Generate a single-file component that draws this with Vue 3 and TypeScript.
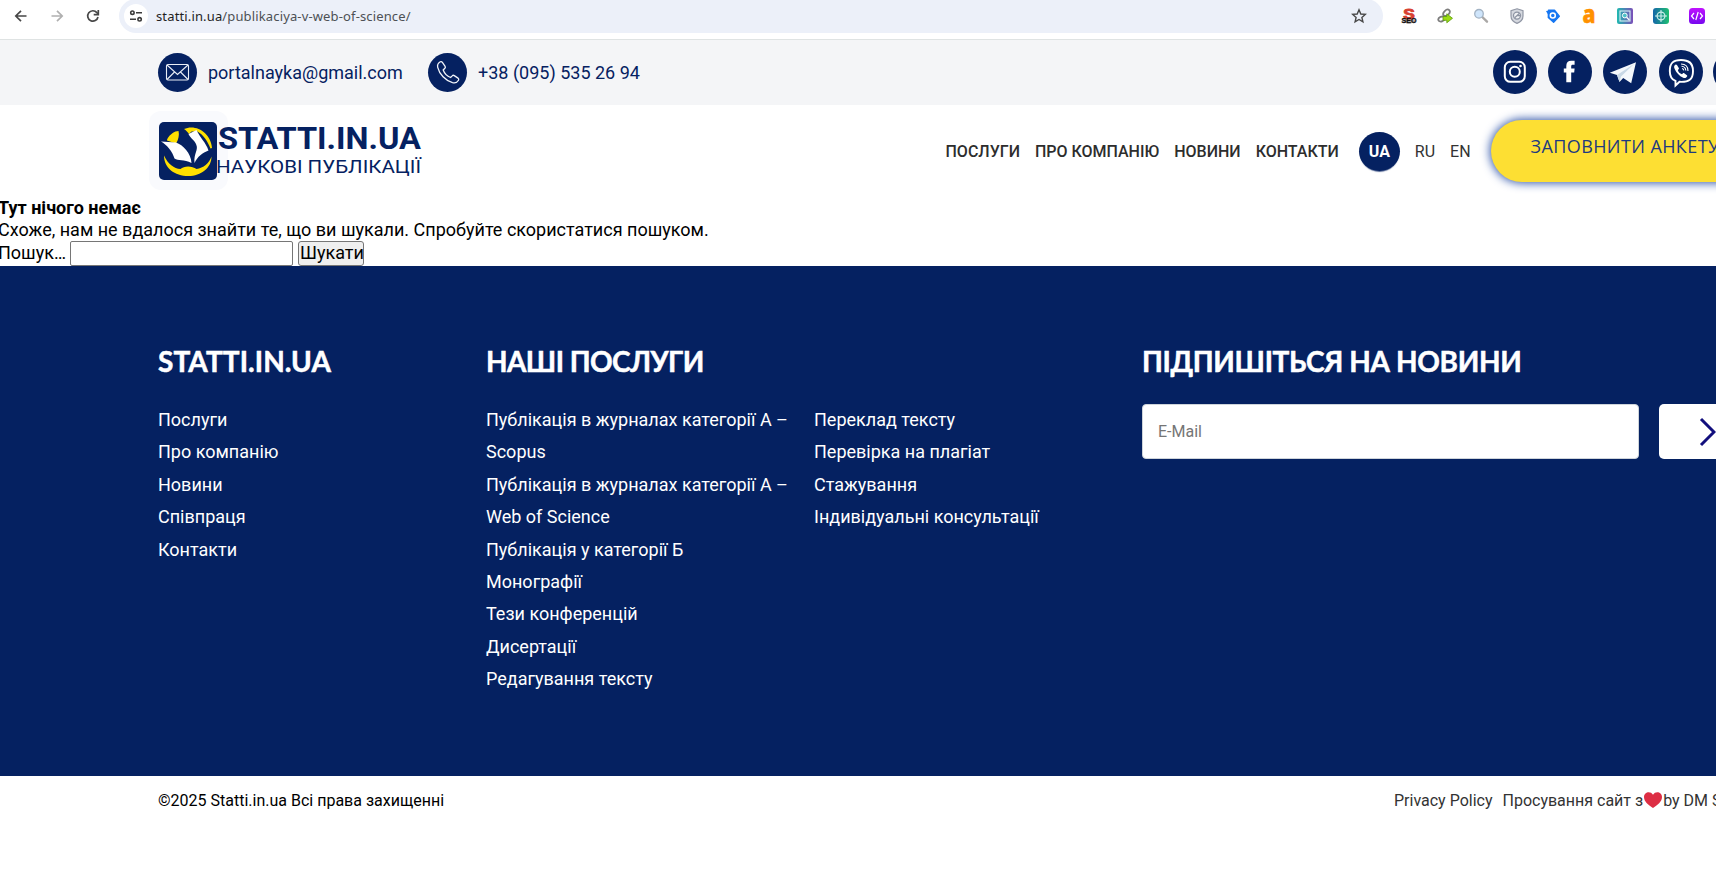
<script setup lang="ts">
interface Link {
  label: string
}

const nav: Link[] = [
  { label: 'ПОСЛУГИ' },
  { label: 'ПРО КОМПАНІЮ' },
  { label: 'НОВИНИ' },
  { label: 'КОНТАКТИ' },
]

const siteLinks: string[] = ['Послуги', 'Про компанію', 'Новини', 'Співпраця', 'Контакти']

const services: string[] = [
  'Публікація в журналах категорії А – Scopus',
  'Публікація в журналах категорії А – Web of Science',
  'Публікація у категорії Б',
  'Монографії',
  'Тези конференцій',
  'Дисертації',
  'Редагування тексту',
]

const moreServices: string[] = [
  'Переклад тексту',
  'Перевірка на плагіат',
  'Стажування',
  'Індивідуальні консультації',
]
</script>

<template>
  <div class="page">
    <div class="browser">
      <svg class="ctl" viewBox="0 0 16 16"><path d="M13.5 8H3M8 2.8L2.8 8L8 13.2" fill="none" stroke="#474747" stroke-width="1.7" /></svg>
      <svg class="ctl" viewBox="0 0 16 16"><path d="M2.5 8H13M8 2.8L13.2 8L8 13.2" fill="none" stroke="#b0b0b0" stroke-width="1.7" /></svg>
      <svg class="ctl" viewBox="0 0 16 16"><path d="M13 9A5.2 5.2 0 1 1 11.9 4.6L13 5.8" fill="none" stroke="#474747" stroke-width="1.7" /><path d="M13.3 2V6.6H8.7" fill="none" stroke="#474747" stroke-width="1.7" /></svg>
      <div class="omnibox">
        <span class="tune">
          <svg width="14" height="14" viewBox="0 0 14 14" fill="none" stroke="#3c3c3c" stroke-width="1.6">
            <circle cx="3.4" cy="3.7" r="1.7" /><path d="M7 3.7H13M1 10.3H7" /><circle cx="10.6" cy="10.3" r="1.7" />
          </svg>
        </span>
        <span class="url"><b>statti.in.ua</b>/publikaciya-v-web-of-science/</span>
        <svg class="star" viewBox="0 0 16 16"><path d="M8 1.8L9.8 6L14.3 6.4L10.9 9.4L11.9 13.8L8 11.5L4.1 13.8L5.1 9.4L1.7 6.4L6.2 6Z" fill="none" stroke="#474747" stroke-width="1.4" /></svg>
      </div>
      <div class="extensions">
        <svg viewBox="0 0 16 16">
          <ellipse cx="8" cy="13" rx="6" ry="2.6" fill="#b9b0ad" />
          <text x="8" y="10.6" text-anchor="middle" font-family="Liberation Sans" font-weight="700" font-size="14" fill="#d8402f" stroke="#d8402f" stroke-width=".9" textLength="11.5" lengthAdjust="spacingAndGlyphs">S</text>
          <text x="8" y="14.6" text-anchor="middle" font-family="Liberation Sans" font-weight="700" font-size="7" fill="#111" stroke="#111" stroke-width=".3" textLength="15" lengthAdjust="spacingAndGlyphs">SEO</text>
        </svg>
        <svg viewBox="0 0 16 16">
          <g fill="none" stroke="#7d7d7d" stroke-width="1.8"><ellipse cx="9.5" cy="4.8" rx="3.8" ry="2.5" transform="rotate(-45 9.5 4.8)" /><ellipse cx="4.5" cy="11" rx="3.3" ry="2.3" transform="rotate(-25 4.5 11)" /></g>
          <path d="M6 8.5H9.8V5.8L15.5 10.3L9.800 14.800V12.300H6Z" fill="#9bdc12" stroke="#5d9b10" stroke-width=".8" />
        </svg>
        <svg viewBox="0 0 16 16">
          <path d="M9.3 9L14 13.7" stroke="#aaa8a6" stroke-width="2.4" stroke-linecap="round" />
          <circle cx="6" cy="5.8" r="4.3" fill="#cfe5fb" stroke="#a3b3c4" stroke-width="1.3" />
        </svg>
        <svg viewBox="0 0 16 16">
          <path d="M8 .8L14 2.6V8C14 11.5 11.5 14 8 15.4C4.5 14 2 11.5 2 8V2.6Z" fill="#d5d8df" stroke="#9197a5" stroke-width="1.2" />
          <circle cx="8" cy="7.6" r="3.5" fill="#f1f2f5" stroke="#8d94a3" stroke-width="1.3" /><path d="M5.7 9.7L10.5 5.3M8 7.6H11" stroke="#8d94a3" stroke-width="1.2" />
        </svg>
        <svg viewBox="0 0 16 16">
          <path d="M3.5 2.2H9.5L14.3 8.2L8.6 14.2L3.3 9.4Z" fill="#1677f2" stroke="#1677f2" stroke-width="1.4" stroke-linejoin="round" />
          <path d="M1 3L5 2.6L3.600 7.500Z" fill="#1677f2" />
          <circle cx="7.8" cy="7.5" r="2.5" fill="#1677f2" stroke="#fff" stroke-width="1.5" />
        </svg>
        <svg viewBox="0 0 16 16"><text x="8" y="14.800" text-anchor="middle" font-family="Open Sans" font-weight="800" font-size="24.500" fill="#ff9100" stroke="#ff9100" stroke-width=".4" textLength="13" lengthAdjust="spacingAndGlyphs">a</text></svg>
        <svg viewBox="0 0 16 16">
          <defs><linearGradient id="teal" x2="1"><stop stop-color="#20b9b0" /><stop offset="1" stop-color="#7c4fb9" /></linearGradient></defs>
          <rect width="16" height="16" rx="2" fill="url(#teal)" /><rect x="3" y="3" width="10" height="10" fill="none" stroke="#d8f1f4" stroke-width="1.1" />
          <circle cx="7.8" cy="7.5" r="2.4" fill="#4cc1c6" stroke="#fff" stroke-width="1" /><path d="M9.6 9.3L12.3 12" stroke="#fff" stroke-width="1.3" />
        </svg>
        <svg viewBox="0 0 16 16">
          <defs><linearGradient id="sea" x2="1"><stop stop-color="#1567a8" /><stop offset="1" stop-color="#1fbf72" /></linearGradient></defs>
          <rect width="16" height="16" rx="3" fill="url(#sea)" /><circle cx="8" cy="8" r="3.9" fill="none" stroke="#cceee9" stroke-width="1.2" /><path d="M8 2V14M2 8H14" stroke="#cceee9" stroke-width="1.1" />
        </svg>
        <svg viewBox="0 0 16 16">
          <defs><linearGradient id="violet" x2="0" y2="1"><stop stop-color="#c012ff" /><stop offset="1" stop-color="#7608ee" /></linearGradient></defs>
          <rect width="16" height="16" rx="3.5" fill="url(#violet)" /><path d="M5 5L2.5 8L5 11M11 5L13.5 8L11 11M9.2 4L6.8 12" fill="none" stroke="#fff" stroke-width="1.2" />
        </svg>
      </div>
    </div>

    <div class="topbar">
      <div class="contact">
        <span class="disc">
          <svg width="39" height="39" viewBox="0 0 39 39" fill="none" stroke="#e9edf6" stroke-width="1.1"><rect x="8.5" y="11.5" width="22" height="15.5" rx="1.5" /><path d="M9 12L19.5 21.5L30 12M9 26.5L16.5 19M30 26.5L22.5 19" /></svg>
        </span>
        <span>portalnayka@gmail.com</span>
      </div>
      <div class="contact phone">
        <span class="disc">
          <svg width="39" height="39" viewBox="0 0 39 39" fill="none" stroke="#f1f4fa" stroke-width="1.3"><path d="M12.3 8.8C10 10.2 9.2 12.2 9.7 14.3C11.3 21 17.5 27.6 24.5 29.6C26.9 30.2 29.3 29.4 30.5 27.3C31 26.4 30.8 25.7 30 25.1L26.3 22.6C25.5 22.1 24.8 22.2 24.2 22.9L22.6 24.5C19.6 23.4 16.3 20 15.2 17L16.9 15.3C17.5 14.7 17.5 14 17.1 13.3L14.4 9.3C13.8 8.5 13.2 8.3 12.3 8.8Z" /></svg>
        </span>
        <span>+38 (095) 535 26 94</span>
      </div>
      <div class="social">
        <svg viewBox="0 0 44 44"><circle cx="22" cy="22" r="22" /><g fill="none" stroke="#fff" stroke-width="2"><rect x="11.8" y="11.8" width="20" height="20" rx="5.5" /><circle cx="21.8" cy="21.8" r="5" /></g><circle cx="27.5" cy="16" r="1.3" fill="#fff" /></svg>
        <svg viewBox="0 0 44 44"><circle cx="22" cy="22" r="22" /><path d="M18.3 32.3V22.5H15.8V18.5H18.3V16C18.3 12.7 20 10.8 23.3 10.8H26.6V14.8H24.8C23.5 14.8 23.2 15.4 23.2 16.5V18.5H26.6L26.2 22.5H23.2V32.3Z" fill="#fff" /></svg>
        <svg viewBox="0 0 44 44"><circle cx="22" cy="22" r="22" /><path d="M6.8 22.8L33 12.3L28.2 33.2L20.2 28L16.5 32L14 25Z" fill="#f4f8fc" /><path d="M14 25L31 14L18 26.5L16.5 32Z" fill="#c8d8e6" /></svg>
        <svg class="viber" viewBox="0 0 44 44"><circle cx="22" cy="22" r="22" /><path d="M22 10C14.5 10 10.8 12.6 10.8 21C10.8 26.5 12.5 29.5 16.5 30.9V35.5L20.5 31.8C30 32.3 34 29.5 34 21C34 12.6 29.5 10 22 10Z" fill="none" stroke="#fff" stroke-width="1.9" /><path d="M16.7 14.5C15 15.4 14.7 16.8 15.6 18.8C17.4 22.9 20.2 26 24.2 27.8C25.8 28.5 27.2 27.8 28.2 26.2C28.5 25.5 28 25 25.2 23.2C24.3 22.8 24 23.5 23 24.3C20.8 23.6 19.4 22 18.8 20C19.8 19.2 20.2 18.8 19.8 18C18.2 15.2 17.6 14.2 16.7 14.5Z" fill="#fff" /><path d="M22 14C26.5 14 29 16.5 29 21M22.5 16.3C25.2 16.5 26.7 18 26.8 20.6M23 18.5C24.2 18.6 24.7 19.2 24.8 20.4" fill="none" stroke="#fff" stroke-width="1.1" /></svg>
        <svg class="last" viewBox="0 0 44 44"><circle cx="22" cy="22" r="22" /></svg>
      </div>
    </div>

    <header class="header">
      <div class="logo-mark">
        <svg width="58" height="58" viewBox="0 0 58 58">
          <rect width="58" height="58" rx="5" fill="#052161" />
          <path d="M8 17.5C11 12 15.5 9 19.5 9C20.5 13 19.5 17.5 17 21.5L8 18.5Z" fill="#ffe000" />
          <path d="M25 7C37 1.5 52 11 53 26L51.5 26.5C48.5 19 44.5 13 38.5 9.5L32.5 9.5L30 12C28.5 10 27 8 25 7Z" fill="#ffe000" />
          <path d="M5 33.5C9 42 15 46.5 21.5 47C25 43.5 33 43.5 37.5 47C44.5 46 50 41.5 52.5 34.5C52.5 46 42 54 29.5 54C15.5 54 5 46 5 33.5Z" fill="#ffe000" />
          <path d="M2 19.5L17 20.5C24 23 32 31 32.5 41C25 37 19 39 15.5 36.5C13.5 29.5 7.5 22.5 2 19.5Z" fill="#fff" />
          <path d="M29.5 12L37.5 8C40.5 15 47 20.5 49.5 28.5C43.5 31 38.5 34.5 35.5 41C34.5 31 40 28 37 22C35 17.5 32 17 29.5 12Z" fill="#fff" />
        </svg>
      </div>
      <svg class="logo-text" width="208" height="70" viewBox="0 0 208 70">
        <text x="0" y="32.5" font-family="Roboto" font-weight="700" font-size="32" textLength="203" lengthAdjust="spacingAndGlyphs">STATTI.IN.UA</text>
        <text x="-2" y="57.2" font-family="Roboto" font-size="19.2" textLength="205" lengthAdjust="spacingAndGlyphs">НАУКОВІ ПУБЛІКАЦІЇ</text>
      </svg>
      <nav class="nav">
        <a v-for="item in nav" :key="item.label">{{ item.label }}</a>
      </nav>
      <div class="langs">
        <span class="active">UA</span>
        <span>RU</span>
        <span>EN</span>
      </div>
      <button class="cta">ЗАПОВНИТИ АНКЕТУ</button>
    </header>

    <main class="empty">
      <h1>Тут нічого немає</h1>
      <p>Схоже, нам не вдалося знайти те, що ви шукали. Спробуйте скористатися пошуком.</p>
      <div class="search">
        <label for="q">Пошук…</label>
        <input id="q" type="text" />
        <button type="button">Шукати</button>
      </div>
    </main>

    <footer class="footer">
      <section>
        <h2 class="brand">STATTI.IN.UA</h2>
        <ul><li v-for="text in siteLinks" :key="text">{{ text }}</li></ul>
      </section>
      <section class="wide">
        <h2 class="services">НАШІ ПОСЛУГИ</h2>
        <div class="pair">
          <ul><li v-for="text in services" :key="text">{{ text }}</li></ul>
          <ul><li v-for="text in moreServices" :key="text">{{ text }}</li></ul>
        </div>
      </section>
      <section class="wide">
        <h2 class="subscribe">ПІДПИШІТЬСЯ НА НОВИНИ</h2>
        <div class="signup">
          <input type="email" placeholder="E-Mail" />
          <button type="button" aria-label="Підписатися">
            <svg width="18" height="30" viewBox="0 0 18 30"><path d="M2 2L15 15L2 28" fill="none" stroke="#120f7d" stroke-width="3" /></svg>
          </button>
        </div>
      </section>
    </footer>

    <div class="legal">
      <span class="copy">©2025 Statti.in.ua Всі права захищенні</span>
      <span class="policy">Privacy Policy</span>
      <span class="credit">Просування сайт з<svg width="18" height="16" viewBox="0 0 18 16"><path d="M9 16C4 12.5 0 9.5 0 5C0 0 6.5-1.5 9 2.8C11.5-1.5 18 0 18 5C18 9.5 14 12.5 9 16Z" fill="#dd2e44" /></svg>by DM Studio</span>
    </div>
  </div>
</template>

<style>
html, body { margin: 0; overflow: hidden; background: #fff; }
</style>

<style scoped>
.page { width: 1716px; height: 870px; overflow: hidden; font-family: Roboto, "Liberation Sans", sans-serif; font-size: 18px; color: #000; background: #fff; }
.page * { box-sizing: border-box; }
h1, h2, p, ul { margin: 0; padding: 0; }
ul { list-style: none; }

.browser { display: flex; align-items: flex-start; height: 40px; padding-left: 13px; border-bottom: 1px solid #dfe3e3; }
.ctl { width: 16px; height: 16px; margin: 8px 20px 0 0; flex: none; }
.omnibox { display: flex; align-items: center; width: 1264px; height: 34px; margin: -1px 18px 0 -2px; padding: 0 16px 0 5px; border-radius: 17px; background: #ecf0f9; flex: none; }
.tune { display: flex; align-items: center; justify-content: center; width: 24px; height: 24px; border-radius: 50%; background: #fff; }
.url { flex: 1; margin-left: 8px; font: 13px/18px "Noto Sans", sans-serif; letter-spacing: 0.14px; color: #4d5055; }
.url b { font-weight: 400; color: #1f1f1f; }
.star { width: 16px; height: 16px; }
.extensions { display: flex; gap: 20px; margin-top: 8px; }
.extensions svg { width: 16px; height: 16px; flex: none; }

.topbar { display: flex; align-items: center; height: 65px; padding: 0 0 0 158px; background: #f4f5f7; color: #052161; }
.contact { display: flex; align-items: center; gap: 11px; width: 270px; flex: none; white-space: nowrap; }
.phone { width: 240px; }
.disc { width: 39px; height: 39px; border-radius: 50%; background: #052161; }
.disc svg { display: block; }
.social { display: flex; gap: 11px; margin-left: 825px; margin-top: -1px; }
.social svg { width: 44px; height: 44px; flex: none; fill: #052161; }
.social .viber { margin-left: 1px; }
.social .last { margin-left: -1px; }

.header { display: flex; align-items: flex-start; height: 92px; padding-left: 149px; }
.logo-mark { width: 79px; height: 79px; margin-top: 6px; padding: 11px 0 0 10px; border-radius: 12px; background: #f9fafd; flex: none; }
.logo-text { margin: 11px 0 0 -10px; fill: #052161; flex: none; overflow: visible; }
.nav { display: flex; gap: 15px; margin: 36px 0 0 519.5px; font-size: 16px; line-height: 21px; font-weight: 500; color: #2d2d2d; white-space: nowrap; flex: none; }
.langs { display: flex; align-items: center; gap: 15px; margin: 27px 0 0 20px; height: 39px; font-size: 16px; color: #333; flex: none; }
.langs .active { width: 41px; height: 39px; border-radius: 50%; background: #052161; color: #fff; font-weight: 700; text-align: center; line-height: 39px; box-shadow: 0 2px 1px -1px #052161aa; }
.cta { width: 270px; height: 62px; margin: 15px 0 0 20px; padding: 0 0 11px 40px; border: 0; border-radius: 31px; background: #fddf33; box-shadow: 0 0 10px 1px #2f54a8; color: #1d3a80; font: 400 18px "Open Sans", sans-serif; letter-spacing: 0.4px; text-align: left; white-space: nowrap; flex: none; }

.empty { height: 69px; margin-left: -2px; }
.empty h1 { font-size: 18px; font-weight: 700; line-height: 22px; }
.empty p { line-height: 22px; }
.search { display: flex; align-items: center; height: 25px; }
.search label { width: 72px; padding-bottom: 2px; }
.search input { width: 223px; height: 25px; margin: 0 5px 0 0; border: 1px solid #767676; border-radius: 2px; font: inherit; }
.search button { width: 66px; height: 25px; padding: 0 0 2px 1px; border: 1px solid #767676; border-radius: 3px; background: #efefef; font: inherit; }

.footer { display: flex; height: 510px; padding: 76px 0 0 158px; background: #052161; color: #fff; }
.footer section { width: 328px; flex: none; }
.footer .wide { width: 656px; }
h2 { height: 62px; font: 700 28px/39px Lato, "Open Sans", sans-serif; white-space: nowrap; -webkit-text-stroke: 0.5px #fff; }
.brand { letter-spacing: 0.08px; }
.services { letter-spacing: -0.55px; }
.subscribe { letter-spacing: -0.33px; }
.pair { display: flex; }
.pair ul { width: 328px; padding-right: 20px; }
li { line-height: 32.4px; }
.signup { display: flex; gap: 20px; }
.signup input { width: 497px; height: 55px; padding: 0 15px; border: 1px solid #ced4da; border-radius: 4px; font: 16px Roboto, sans-serif; }
.signup input::placeholder { color: #757575; }
.signup button { width: 100px; height: 55px; padding: 0 0 0 40px; border: 0; border-radius: 5px; background: #fff; text-align: left; flex: none; }
.signup button svg { display: block; }

.legal { display: flex; padding: 14px 0 0 158px; font-size: 16px; line-height: 21px; white-space: nowrap; }
.copy { width: 1236px; flex: none; }
.policy, .credit { color: #333; flex: none; }
.policy { margin-right: 10px; }
.credit svg { margin: 0 1px 0 1px; vertical-align: -2px; }
</style>
